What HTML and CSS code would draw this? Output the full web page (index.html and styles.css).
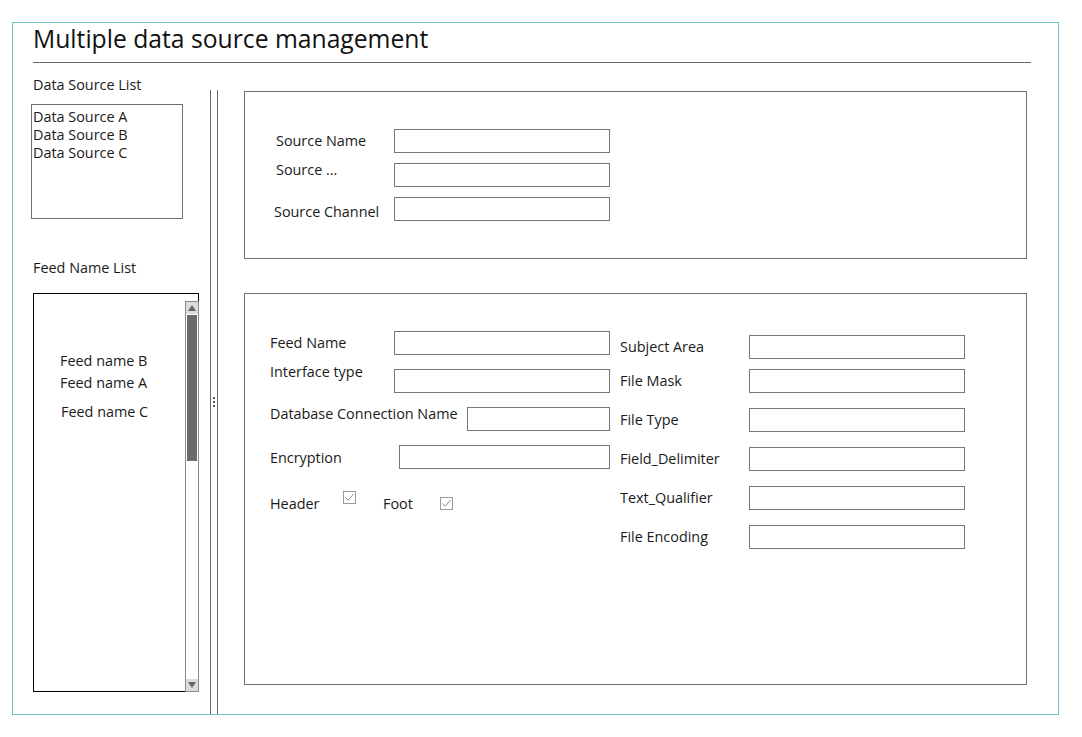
FILE: index.html
```html
<!DOCTYPE html>
<html>
<head>
<meta charset="utf-8">
<link rel="stylesheet" href="styles.css">
</head>
<body>
<div class="frame">
  <div class="title">Multiple data source management</div>
  <div class="main">
    <div class="left">
      <div class="caption cap-ds">Data Source List</div>
      <div class="ds-list">
        <div>Data Source A</div>
        <div>Data Source B</div>
        <div>Data Source C</div>
      </div>
      <div class="caption cap-feed">Feed Name List</div>
      <div class="feed-list">
        <div class="feed-items">
          <div class="feed-item">Feed name B</div>
          <div class="feed-item fi-a">Feed name A</div>
          <div class="feed-item fi-c">Feed name C</div>
        </div>
        <div class="scrollbar">
          <div class="sb-btn"><svg width="8" height="6" viewBox="0 0 8 6"><polygon points="4,0 8,6 0,6" fill="#666"/></svg></div>
          <div class="sb-thumb"></div>
          <div class="sb-track"></div>
          <div class="sb-btn"><svg width="8" height="6" viewBox="0 0 8 6"><polygon points="0,0 8,0 4,6" fill="#666"/></svg></div>
        </div>
      </div>
    </div>
    <div class="splitter"><span class="grip"></span></div>
    <div class="right">
      <div class="panel panel-source">
        <div class="row s1"><div class="lbl">Source Name</div><div class="inp"></div></div>
        <div class="row s2"><div class="lbl">Source ...</div><div class="inp"></div></div>
        <div class="row s3"><div class="lbl">Source Channel</div><div class="inp"></div></div>
      </div>
      <div class="panel panel-feed">
        <div class="col col-left">
          <div class="row f1"><div class="lbl">Feed Name</div><div class="inp"></div></div>
          <div class="row f2"><div class="lbl">Interface type</div><div class="inp"></div></div>
          <div class="row f3"><div class="lbl">Database Connection Name</div><div class="inp"></div></div>
          <div class="row f4"><div class="lbl">Encryption</div><div class="inp"></div></div>
          <div class="row f5">
            <div class="lbl lbl-header">Header</div>
            <span class="chk chk-header"><svg width="13" height="13" viewBox="0 0 13 13"><rect x="0.5" y="0.5" width="12" height="12" fill="#fff" stroke="#9a9a9a"/><polyline points="2.5,6.5 5.2,9.2 10.5,3" fill="none" stroke="#8a8a8a" stroke-width="1"/></svg></span>
            <div class="lbl lbl-foot">Foot</div>
            <span class="chk chk-foot"><svg width="13" height="13" viewBox="0 0 13 13"><rect x="0.5" y="0.5" width="12" height="12" fill="#fff" stroke="#9a9a9a"/><polyline points="2.5,6.5 5.2,9.2 10.5,3" fill="none" stroke="#8a8a8a" stroke-width="1"/></svg></span>
          </div>
        </div>
        <div class="col col-right">
          <div class="row r1"><div class="lbl">Subject Area</div><div class="inp"></div></div>
          <div class="row rn"><div class="lbl">File Mask</div><div class="inp"></div></div>
          <div class="row rw"><div class="lbl">File Type</div><div class="inp"></div></div>
          <div class="row rw"><div class="lbl">Field_Delimiter</div><div class="inp"></div></div>
          <div class="row rw"><div class="lbl">Text_Qualifier</div><div class="inp"></div></div>
          <div class="row rw"><div class="lbl">File Encoding</div><div class="inp"></div></div>
        </div>
      </div>
    </div>
  </div>
</div>
</body>
</html>
```
FILE: styles.css
```css
body {
  margin: 0;
  background: #fff;
  color: #1a1a1a;
  font-family: "Open Sans", "Noto Sans", sans-serif;
}

.frame {
  margin: 22px 0 0 12px;
  width: 1047px;
  height: 693px;
  border: 1px solid #6fc2c8;
  box-sizing: border-box;
  display: flex;
  flex-direction: column;
}

.title {
  margin-left: 20px;
  width: 998px;
  height: 40px;
  box-sizing: border-box;
  border-bottom: 1px solid #666;
  font-size: 24.7px;
  line-height: 31px;
  color: #111;
}

.main {
  display: flex;
  flex: 1;
}

.left {
  width: 186px;
  padding-left: 18px;
  box-sizing: border-box;
  flex: none;
}

.caption {
  font-size: 14.4px;
  line-height: 20px;
  margin-left: 2px;
}

.cap-ds { margin-top: 12px; }
.cap-feed { margin-top: 39px; }

.ds-list {
  margin-top: 9px;
  width: 152px;
  height: 115px;
  border: 1px solid #707070;
  box-sizing: border-box;
  padding: 3px 0 0 1px;
  font-size: 14.4px;
  line-height: 18px;
}

.feed-list {
  position: relative;
  margin-top: 15px;
  margin-left: 2px;
  width: 166px;
  height: 399px;
  border: 1px solid #000;
  box-sizing: border-box;
}

.feed-items {
  padding: 58px 0 0 26px;
  font-size: 14.4px;
  line-height: 18px;
}

.fi-a { margin-top: 4px; }
.fi-c { margin-top: 11px; margin-left: 1px; }

.scrollbar {
  position: absolute;
  top: 7px;
  right: -1px;
  bottom: -1px;
  width: 14px;
  border: 1px solid #8a8a8a;
  box-sizing: border-box;
  background: #fff;
  display: flex;
  flex-direction: column;
}

.sb-btn {
  height: 12px;
  background: #dcdcdc;
  display: flex;
  align-items: center;
  justify-content: center;
  flex: none;
}

.sb-thumb {
  height: 146px;
  background: #6b6b6b;
  margin: 1px 1px 0;
  flex: none;
}

.sb-track { flex: 1; }

.splitter {
  margin: 27px 0 0 11px;
  width: 8px;
  border-left: 1px solid #666;
  border-right: 1px solid #666;
  box-sizing: border-box;
  display: flex;
  align-items: center;
  justify-content: center;
  flex: none;
}

.grip {
  width: 2px;
  height: 10px;
  background-image: linear-gradient(#555 50%, transparent 50%);
  background-size: 2px 4px;
  margin-left: -1px;
}

.right {
  margin-left: 26px;
  width: 783px;
  flex: none;
}

.panel {
  border: 1px solid #707070;
  box-sizing: border-box;
}

.row {
  display: flex;
  align-items: flex-start;
}

.lbl {
  font-size: 14.4px;
  line-height: 20px;
  flex: none;
  white-space: nowrap;
}

.inp {
  width: 216px;
  height: 24px;
  border: 1px solid #777;
  box-sizing: border-box;
  flex: none;
  background: #fff;
}

/* Source panel */
.panel-source {
  margin-top: 28px;
  height: 168px;
  padding-left: 31px;
}

.s1 { margin-top: 37px; }
.s1 .lbl { width: 118px; margin-top: 2px; }
.s2 { margin-top: 7px; }
.s2 .lbl { width: 118px; }
.s2 .inp { margin-top: 3px; }
.s3 { margin-top: 10px; }
.s3 .lbl { width: 120px; margin-left: -2px; margin-top: 5px; }

/* Feed panel */
.panel-feed {
  margin-top: 34px;
  height: 392px;
  display: flex;
}

.col-left {
  width: 375px;
  padding-left: 25px;
  box-sizing: border-box;
  flex: none;
}

.f1 { margin-top: 37px; }
.f1 .lbl { width: 124px; margin-top: 2px; }
.f2 { margin-top: 7px; }
.f2 .lbl { width: 124px; }
.f2 .inp { margin-top: 7px; }
.f3 { margin-top: 11px; }
.f3 .lbl { width: 197px; }
.f3 .inp { width: 143px; margin-top: 3px; }
.f4 { margin-top: 14px; }
.f4 .lbl { width: 129px; margin-top: 3px; }
.f4 .inp { width: 211px; }
.f5 { margin-top: 22px; }
.lbl-header { width: 73px; margin-top: 3px; }
.lbl-foot { width: 57px; margin-left: 27px; margin-top: 3px; }
.chk { display: block; width: 13px; height: 13px; flex: none; }
.chk svg { display: block; }
.chk-foot { margin-top: 6px; }

.col-right {
  flex: none;
}

.col-right .lbl { width: 129px; margin-top: 2px; }
.r1 { margin-top: 41px; }
.rn { margin-top: 10px; }
.rw { margin-top: 15px; }
```
